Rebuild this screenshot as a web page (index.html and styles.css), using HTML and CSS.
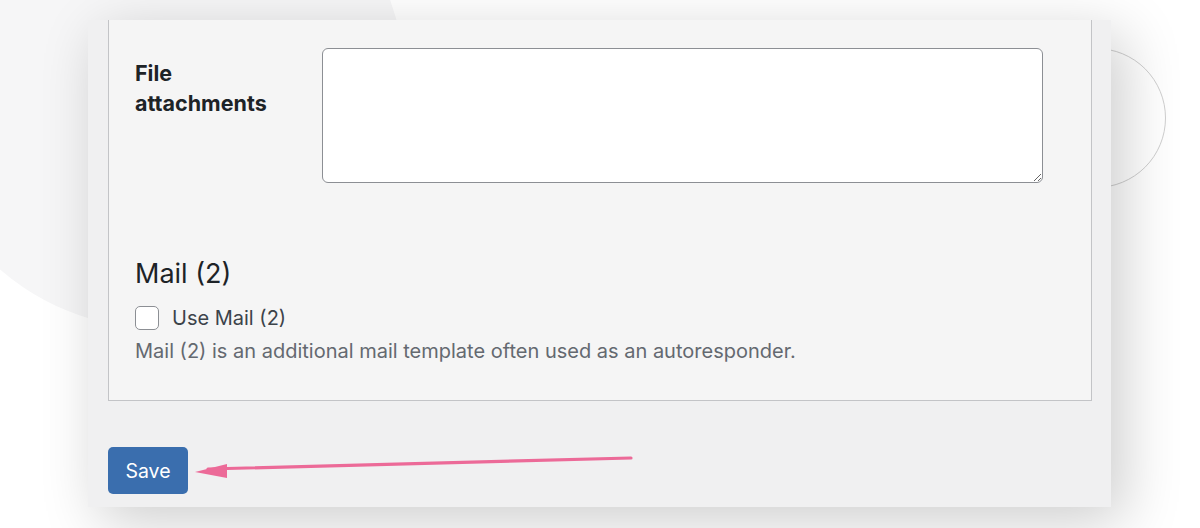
FILE: index.html
```html
<!DOCTYPE html>
<html lang="en">
<head>
    <meta charset="UTF-8">
    <meta name="viewport" content="width=device-width, initial-scale=1.0">
    <title>Contact form - Mail</title>
    <link rel="stylesheet" href="styles.css">
</head>
<body>
    <!-- decorative background shapes -->
    <div class="blob blob-left"></div>
    <div class="blob blob-right"></div>

    <div class="window">
        <div class="panel">
            <div class="field-row">
                <label class="field-label" for="attachments">File attachments</label>
                <textarea id="attachments" class="field-input"></textarea>
            </div>

            <h2 class="section-title">Mail (2)</h2>
            <label class="check-row">
                <span class="checkbox"></span>
                <span>Use Mail (2)</span>
            </label>
            <p class="description">Mail (2) is an additional mail template often used as an autoresponder.</p>
        </div>

        <div class="actions">
            <button class="button-primary">Save</button>
        </div>
    </div>

    <!-- annotation arrow pointing at the Save button -->
    <svg class="arrow" width="460" height="40" viewBox="0 0 460 40">
        <line x1="28" y1="26" x2="451" y2="15" stroke="#ec6a98" stroke-width="3.2" stroke-linecap="round"/>
        <polygon points="15,29 47,21 47,35" fill="#ec6a98"/>
    </svg>
</body>
</html>
```

FILE: styles.css
```css
body {
    margin: 0;
    height: 528px;
    overflow: hidden;
    background: #ffffff;
    font-family: Inter, "Noto Sans", sans-serif;
    position: relative;
}

.blob {
    position: absolute;
    border-radius: 50%;
}
.blob-left {
    left: -85px;
    top: -161px;
    width: 490px;
    height: 490px;
    background: #f6f6f7;
}
.blob-right {
    left: 1026px;
    top: 48px;
    width: 140px;
    height: 140px;
    box-sizing: border-box;
    border: 1px solid #cfcfcf;
}

.window {
    position: relative;
    margin: 20px 0 0 88px;
    width: 1023px;
    height: 487px;
    box-sizing: border-box;
    padding-left: 20px;
    background: #f0f0f1;
    box-shadow: 12px 14px 55px rgba(0, 0, 0, 0.2);
}

.panel {
    width: 984px;
    box-sizing: border-box;
    padding: 28px 26px 34px;
    background: #f5f5f5;
    border: 1px solid #c3c4c7;
    border-top: none;
}

.field-row {
    display: flex;
}
.field-label {
    width: 187px;
    box-sizing: border-box;
    padding: 10px 50px 0 0;
    font-size: 21.5px;
    line-height: 30px;
    font-weight: 700;
    color: #1d2327;
}
.field-input {
    width: 721px;
    height: 135px;
    box-sizing: border-box;
    margin: 0;
    border: 1px solid #8c8f94;
    border-radius: 6px;
    background: #fff;
}

.section-title {
    margin: 73px 0 12px;
    font-size: 27px;
    line-height: 35px;
    font-weight: 400;
    color: #1d2327;
}

.check-row {
    display: flex;
    align-items: center;
    gap: 13px;
    font-size: 20px;
    line-height: 30px;
    color: #3c434a;
}
.checkbox {
    width: 24px;
    height: 24px;
    box-sizing: border-box;
    border: 1px solid #8c8f94;
    border-radius: 5px;
    background: #fff;
}

.description {
    margin: 4px 0 0;
    font-size: 20px;
    line-height: 29px;
    color: #646970;
}

.actions {
    padding-top: 46px;
}
.button-primary {
    width: 80px;
    height: 47px;
    padding: 0;
    border: none;
    border-radius: 5px;
    background: #3a6eae;
    color: #fff;
    font-family: Inter, "Noto Sans", sans-serif;
    font-size: 19.5px;
    cursor: pointer;
}

.arrow {
    position: absolute;
    left: 180px;
    top: 443px;
}
```
